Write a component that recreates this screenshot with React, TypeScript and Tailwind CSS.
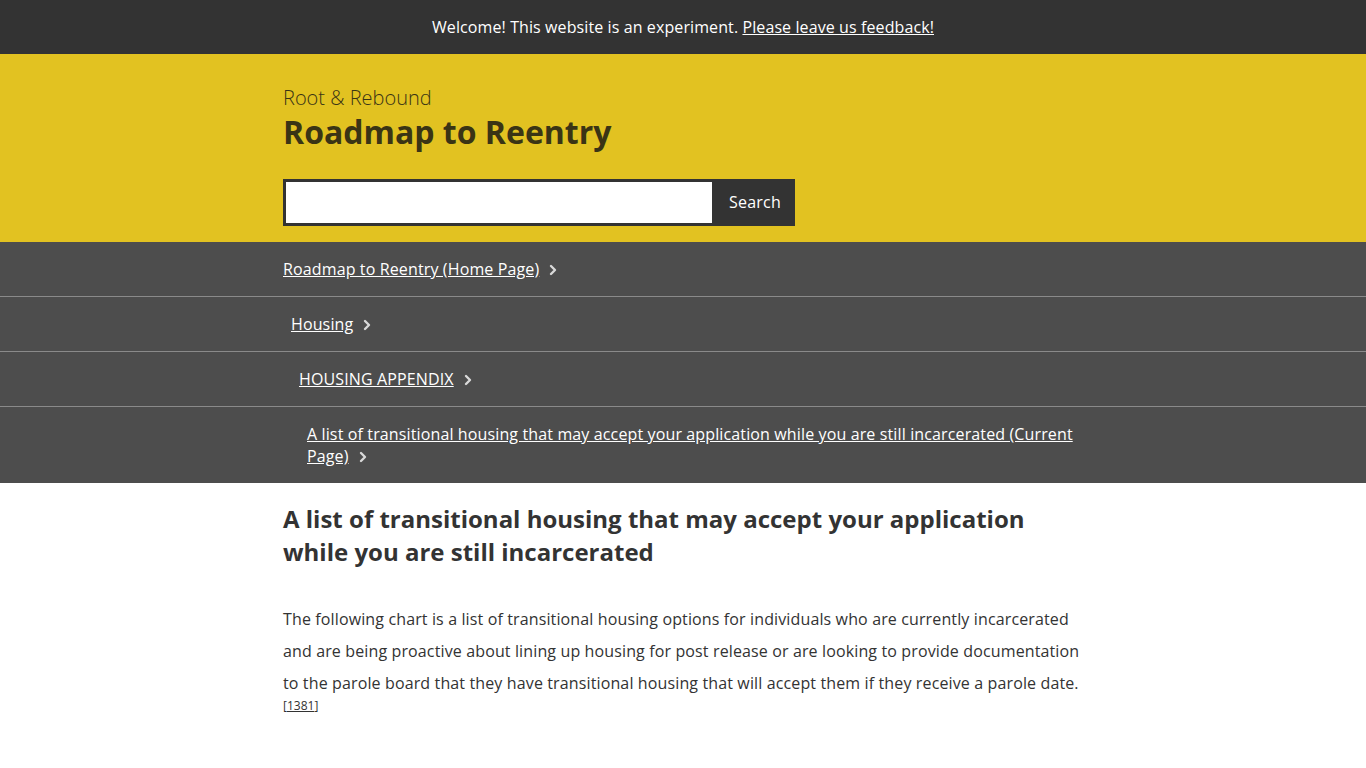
const font = { fontFamily: '"Open Sans", "Noto Sans", sans-serif' };

const Chevron = () => (
  <svg
    width="8"
    height="12"
    viewBox="0 0 8 12"
    className="inline-block ml-[10px] align-[-1px]"
    aria-hidden
  >
    <path d="M2 2l4 4-4 4" fill="none" stroke="#d9d9d9" strokeWidth="2.4" strokeLinecap="round" strokeLinejoin="round" />
  </svg>
);

const crumbs = [
  { label: "Roadmap to Reentry (Home Page)", indent: "pl-0" },
  { label: "Housing", indent: "pl-2" },
  { label: "HOUSING APPENDIX", indent: "pl-4" },
  {
    label:
      "A list of transitional housing that may accept your application while you are still incarcerated (Current Page)",
    indent: "pl-6",
  },
];

const App: React.FC = () => {
  return (
    <div className="min-h-screen bg-white text-[#333]" style={font}>
      {/* Welcome banner */}
      <div className="h-[54px] bg-[#333333] flex items-center justify-center text-white text-base tracking-[0.1px]">
        <span>
          Welcome! This website is an experiment.{" "}
          <a href="#" className="underline">
            Please leave us feedback!
          </a>
        </span>
      </div>

      {/* Header */}
      <div className="bg-[#e2c221]">
        <div className="w-[800px] mx-auto pt-[30px] pb-[16px]">
          <div className="text-[20px] font-light leading-[28px] text-[#3a3415]">Root &amp; Rebound</div>
          <h1 className="text-[32px] font-bold leading-[40px] text-[#3a3415]">Roadmap to Reentry</h1>
          <form className="mt-[27px] flex w-[512px] h-[47px] border-[3px] border-[#333]" onSubmit={(e) => e.preventDefault()}>
            <input type="text" className="flex-1 bg-white outline-none px-2" />
            <button className="w-[80px] pl-[6px] pb-[2px] bg-[#333] text-white text-base font-medium tracking-[0.2px]">Search</button>
          </form>
        </div>
      </div>

      {/* Breadcrumbs */}
      <nav className="bg-[#4d4d4d]">
        {crumbs.map((c, i) => (
          <div key={c.label} className={i < crumbs.length - 1 ? "border-b border-[#8a8a8a]" : ""}>
            <div className={`w-[800px] mx-auto py-4 ${c.indent}`}>
              <div className="text-white text-base leading-[22px] tracking-[0.13px]">
                <a href="#" className="underline">
                  {c.label}
                </a>
                <Chevron />
              </div>
            </div>
          </div>
        ))}
      </nav>

      {/* Content */}
      <main className="w-[800px] mx-auto pt-[19px] pb-10">
        <h2 className="text-[24px] font-bold leading-[33px] text-[#333]">
          A list of transitional housing that may accept your application while you are still incarcerated
        </h2>
        <p className="mt-[35px] text-base leading-[32px] text-[#333] tracking-[0.13px]">
          The following chart is a list of transitional housing options for individuals who are currently
          incarcerated and are being proactive about lining up housing for post release or are looking to
          provide documentation to the parole board that they have transitional housing that will accept
          them if they receive a parole date.
          <sup className="text-[12px] leading-none tracking-normal -top-[11px]">
            [
            <a href="#" className="underline">
              1381
            </a>
            ]
          </sup>
        </p>
      </main>
    </div>
  );
};

export default App;
